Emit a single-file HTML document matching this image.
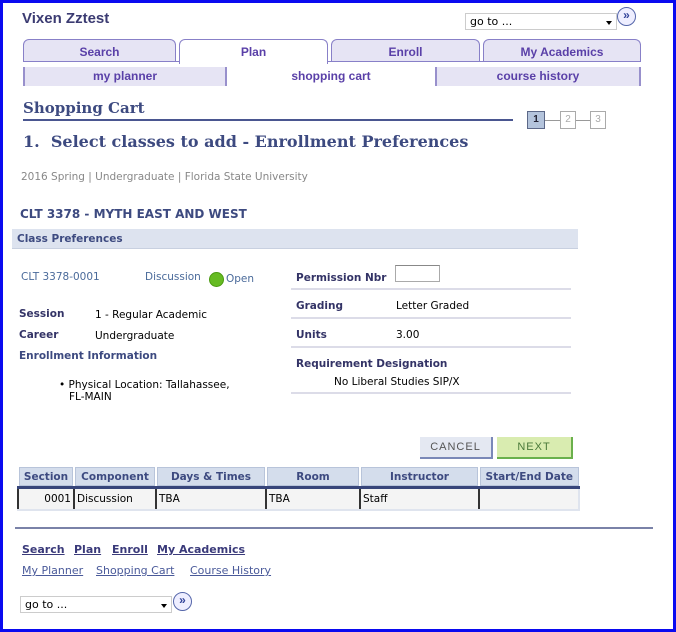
<!DOCTYPE html>
<html><head><meta charset="utf-8"><style>
*{margin:0;padding:0;box-sizing:border-box}
body{width:676px;height:632px;background:#fff;position:relative;overflow:hidden;font-family:"Liberation Sans","DejaVu Sans",sans-serif}
#f{position:absolute;left:0;top:0;width:676px;height:632px;border:3px solid #0a0af0;z-index:9;pointer-events:none}
.a{position:absolute;white-space:nowrap}
.tab{position:absolute;top:39px;height:23px;border:1px solid #8880c8;border-bottom:none;border-radius:6px 6px 0 0;background:#e6e4f4;color:#5a40a8;font-weight:bold;font-size:12px;text-align:center;line-height:24px}
.sub{position:absolute;top:67px;height:19px;background:#e6e4f4;border-left:2px solid #9890cc;border-right:2px solid #9890cc;color:#5a40a8;font-weight:bold;font-size:12px;text-align:center;line-height:19px}
.lbl{font-family:"DejaVu Sans",sans-serif;font-weight:bold;font-size:10.5px;color:#333366}
.val{font-family:"DejaVu Sans",sans-serif;font-size:10.5px;color:#000}
.hr{position:absolute;left:291px;width:280px;height:2px;background:#dcdce8}
.sel{position:absolute;height:17px;border:1px solid #ccc;background:#fff;font-family:"DejaVu Sans",sans-serif;font-size:11px;padding-left:4px;line-height:15px}
.sel:after{content:"";position:absolute;right:4px;top:7px;border:3.5px solid transparent;border-top:4px solid #000}
.go{position:absolute;width:19px;height:19px;border:1.5px solid #5566aa;border-radius:50%;color:#33449a;font-size:12px;text-align:center;line-height:15px;font-weight:bold;background:#eef}
table{position:absolute;left:17px;top:466px;border-collapse:collapse;table-layout:fixed;width:561px;font-family:"DejaVu Sans",sans-serif;font-size:10.5px}
th{background:#d4ddec;color:#3d4a80;height:21px;border:1px solid #fff;border-left:2px solid #fff;border-bottom:3px solid #37457a;font-weight:bold;box-shadow:inset 0 0 0 1px #b8c4da;overflow:hidden;white-space:nowrap}
td{height:22px;background:#f4f4f4;border-left:2px solid #333;border-bottom:2px solid #dfe4ee;padding:0 2px;overflow:hidden;white-space:nowrap}
.fl{text-decoration:underline;font-size:11px;font-family:"DejaVu Sans",sans-serif}
</style></head><body><div id="f"></div>
<div class="a" style="left:22px;top:10px;font-size:15px;font-weight:bold;color:#3b3b72">Vixen Zztest</div>
<div class="sel" style="left:465px;top:13px;width:152px">go to ...</div>
<div class="go" style="left:617px;top:7px">»</div>

<div class="tab" style="left:23px;width:153px">Search</div>
<div class="tab" style="left:179px;width:149px;background:#fff;height:25px">Plan</div>
<div class="tab" style="left:331px;width:149px">Enroll</div>
<div class="tab" style="left:483px;width:158px">My Academics</div>
<div class="a" style="left:23px;top:61px;width:156px;height:1px;background:#8880c8"></div>
<div class="a" style="left:328px;top:61px;width:313px;height:1px;background:#8880c8"></div>
<div class="sub" style="left:23px;width:204px">my planner</div>
<div class="sub" style="left:227px;width:208px;background:#fff;border-left:none;border-right:none">shopping cart</div>
<div class="sub" style="left:435px;width:206px">course history</div>

<div class="a" style="left:23px;top:99px;font-family:'DejaVu Serif','Liberation Serif',serif;font-weight:bold;font-size:15px;color:#3d4a80">Shopping Cart</div>
<div class="a" style="left:23px;top:119px;width:490px;height:2px;background:#4a5690"></div>
<div class="a" style="left:527px;top:111px;width:18px;height:18px;background:#b4c4dc;border:1px solid #5c6888;font-size:10px;text-align:center;line-height:16px;font-weight:bold;color:#223">1</div>
<div class="a" style="left:545px;top:120px;width:15px;height:1px;background:#999"></div>
<div class="a" style="left:560px;top:111px;width:16px;height:18px;border:1px solid #aaa;font-size:10px;text-align:center;line-height:16px;color:#aaa">2</div>
<div class="a" style="left:576px;top:120px;width:14px;height:1px;background:#999"></div>
<div class="a" style="left:590px;top:111px;width:16px;height:18px;border:1px solid #aaa;font-size:10px;text-align:center;line-height:16px;color:#aaa">3</div>

<div class="a" style="left:23px;top:132px;font-family:'DejaVu Serif','Liberation Serif',serif;font-weight:bold;font-size:16px;color:#3d4a80">1.&nbsp; Select classes to add - Enrollment Preferences</div>
<div class="a" style="left:21px;top:171px;font-family:'DejaVu Sans',sans-serif;font-size:10.5px;color:#888">2016 Spring | Undergraduate | Florida State University</div>

<div class="a" style="left:20px;top:207px;font-family:'DejaVu Sans',sans-serif;font-weight:bold;font-size:12px;color:#3d4a80">CLT 3378 - MYTH EAST AND WEST</div>
<div class="a" style="left:12px;top:229px;width:566px;height:20px;background:#dde3ef;border-bottom:1px solid #c8d0e0"></div>
<div class="a lbl" style="left:17px;top:233px;color:#3d4a80">Class Preferences</div>

<div class="a lbl" style="left:21px;top:271px;color:#4a6a9a;font-weight:normal">CLT 3378-0001</div>
<div class="a lbl" style="left:145px;top:271px;color:#4a6a9a;font-weight:normal">Discussion</div>
<div class="a" style="left:209px;top:272px;width:15px;height:15px;border-radius:50%;background:#66bb22;border:1px solid #4a9a10"></div>
<div class="a lbl" style="left:226px;top:273px;color:#4a6a9a;font-weight:normal">Open</div>
<div class="a lbl" style="left:19px;top:308px">Session</div>
<div class="a val" style="left:95px;top:309px">1 - Regular Academic</div>
<div class="a lbl" style="left:19px;top:329px">Career</div>
<div class="a val" style="left:95px;top:330px">Undergraduate</div>
<div class="a lbl" style="left:19px;top:350px;color:#3d4a80">Enrollment Information</div>
<div class="a val" style="left:59px;top:379px">• Physical Location: Tallahassee,</div>
<div class="a val" style="left:69px;top:391px">FL-MAIN</div>

<div class="a lbl" style="left:296px;top:272px">Permission Nbr</div>
<div class="a" style="left:395px;top:265px;width:45px;height:17px;border:1px solid #aaa;border-top-color:#888"></div>
<div class="hr" style="top:288px"></div>
<div class="a lbl" style="left:296px;top:300px">Grading</div>
<div class="a val" style="left:396px;top:300px">Letter Graded</div>
<div class="hr" style="top:317px"></div>
<div class="a lbl" style="left:296px;top:329px">Units</div>
<div class="a val" style="left:396px;top:329px">3.00</div>
<div class="hr" style="top:346px"></div>
<div class="a lbl" style="left:296px;top:358px">Requirement Designation</div>
<div class="a val" style="left:334px;top:376px">No Liberal Studies SIP/X</div>
<div class="hr" style="top:392px"></div>

<div class="a" style="left:420px;top:437px;width:73px;height:22px;background:#e4e8f2;border-right:2px solid #7a88b8;border-bottom:2px solid #7a88b8;font-size:11px;color:#555;text-align:center;line-height:21px;letter-spacing:1px">CANCEL</div>
<div class="a" style="left:497px;top:437px;width:76px;height:22px;background:#d9ecb0;border-right:2px solid #6ab04c;border-bottom:2px solid #6ab04c;font-size:11px;color:#4a7a3a;text-align:center;line-height:21px;letter-spacing:1px">NEXT</div>

<table>
<colgroup><col style="width:56px"><col style="width:82px"><col style="width:110px"><col style="width:94px"><col style="width:119px"><col style="width:100px"></colgroup>
<tr><th>Section</th><th>Component</th><th>Days &amp; Times</th><th>Room</th><th>Instructor</th><th>Start/End Date</th></tr>
<tr><td style="text-align:right">0001</td><td>Discussion</td><td>TBA</td><td>TBA</td><td>Staff</td><td style="border-right:2px solid #dfe4ee"></td></tr>
</table>

<div class="a" style="left:15px;top:527px;width:638px;height:2px;background:#7a82a8"></div>
<div class="a fl" style="left:22px;top:543px;font-weight:bold;color:#3a3a7a">Search</div>
<div class="a fl" style="left:74px;top:543px;font-weight:bold;color:#3a3a7a">Plan</div>
<div class="a fl" style="left:112px;top:543px;font-weight:bold;color:#3a3a7a">Enroll</div>
<div class="a fl" style="left:157px;top:543px;font-weight:bold;color:#3a3a7a">My Academics</div>
<div class="a fl" style="left:22px;top:564px;color:#4a5a9a">My Planner</div>
<div class="a fl" style="left:96px;top:564px;color:#4a5a9a">Shopping Cart</div>
<div class="a fl" style="left:190px;top:564px;color:#4a5a9a">Course History</div>
<div class="sel" style="left:20px;top:596px;width:152px">go to ...</div>
<div class="go" style="left:173px;top:592px">»</div>
</body></html>
